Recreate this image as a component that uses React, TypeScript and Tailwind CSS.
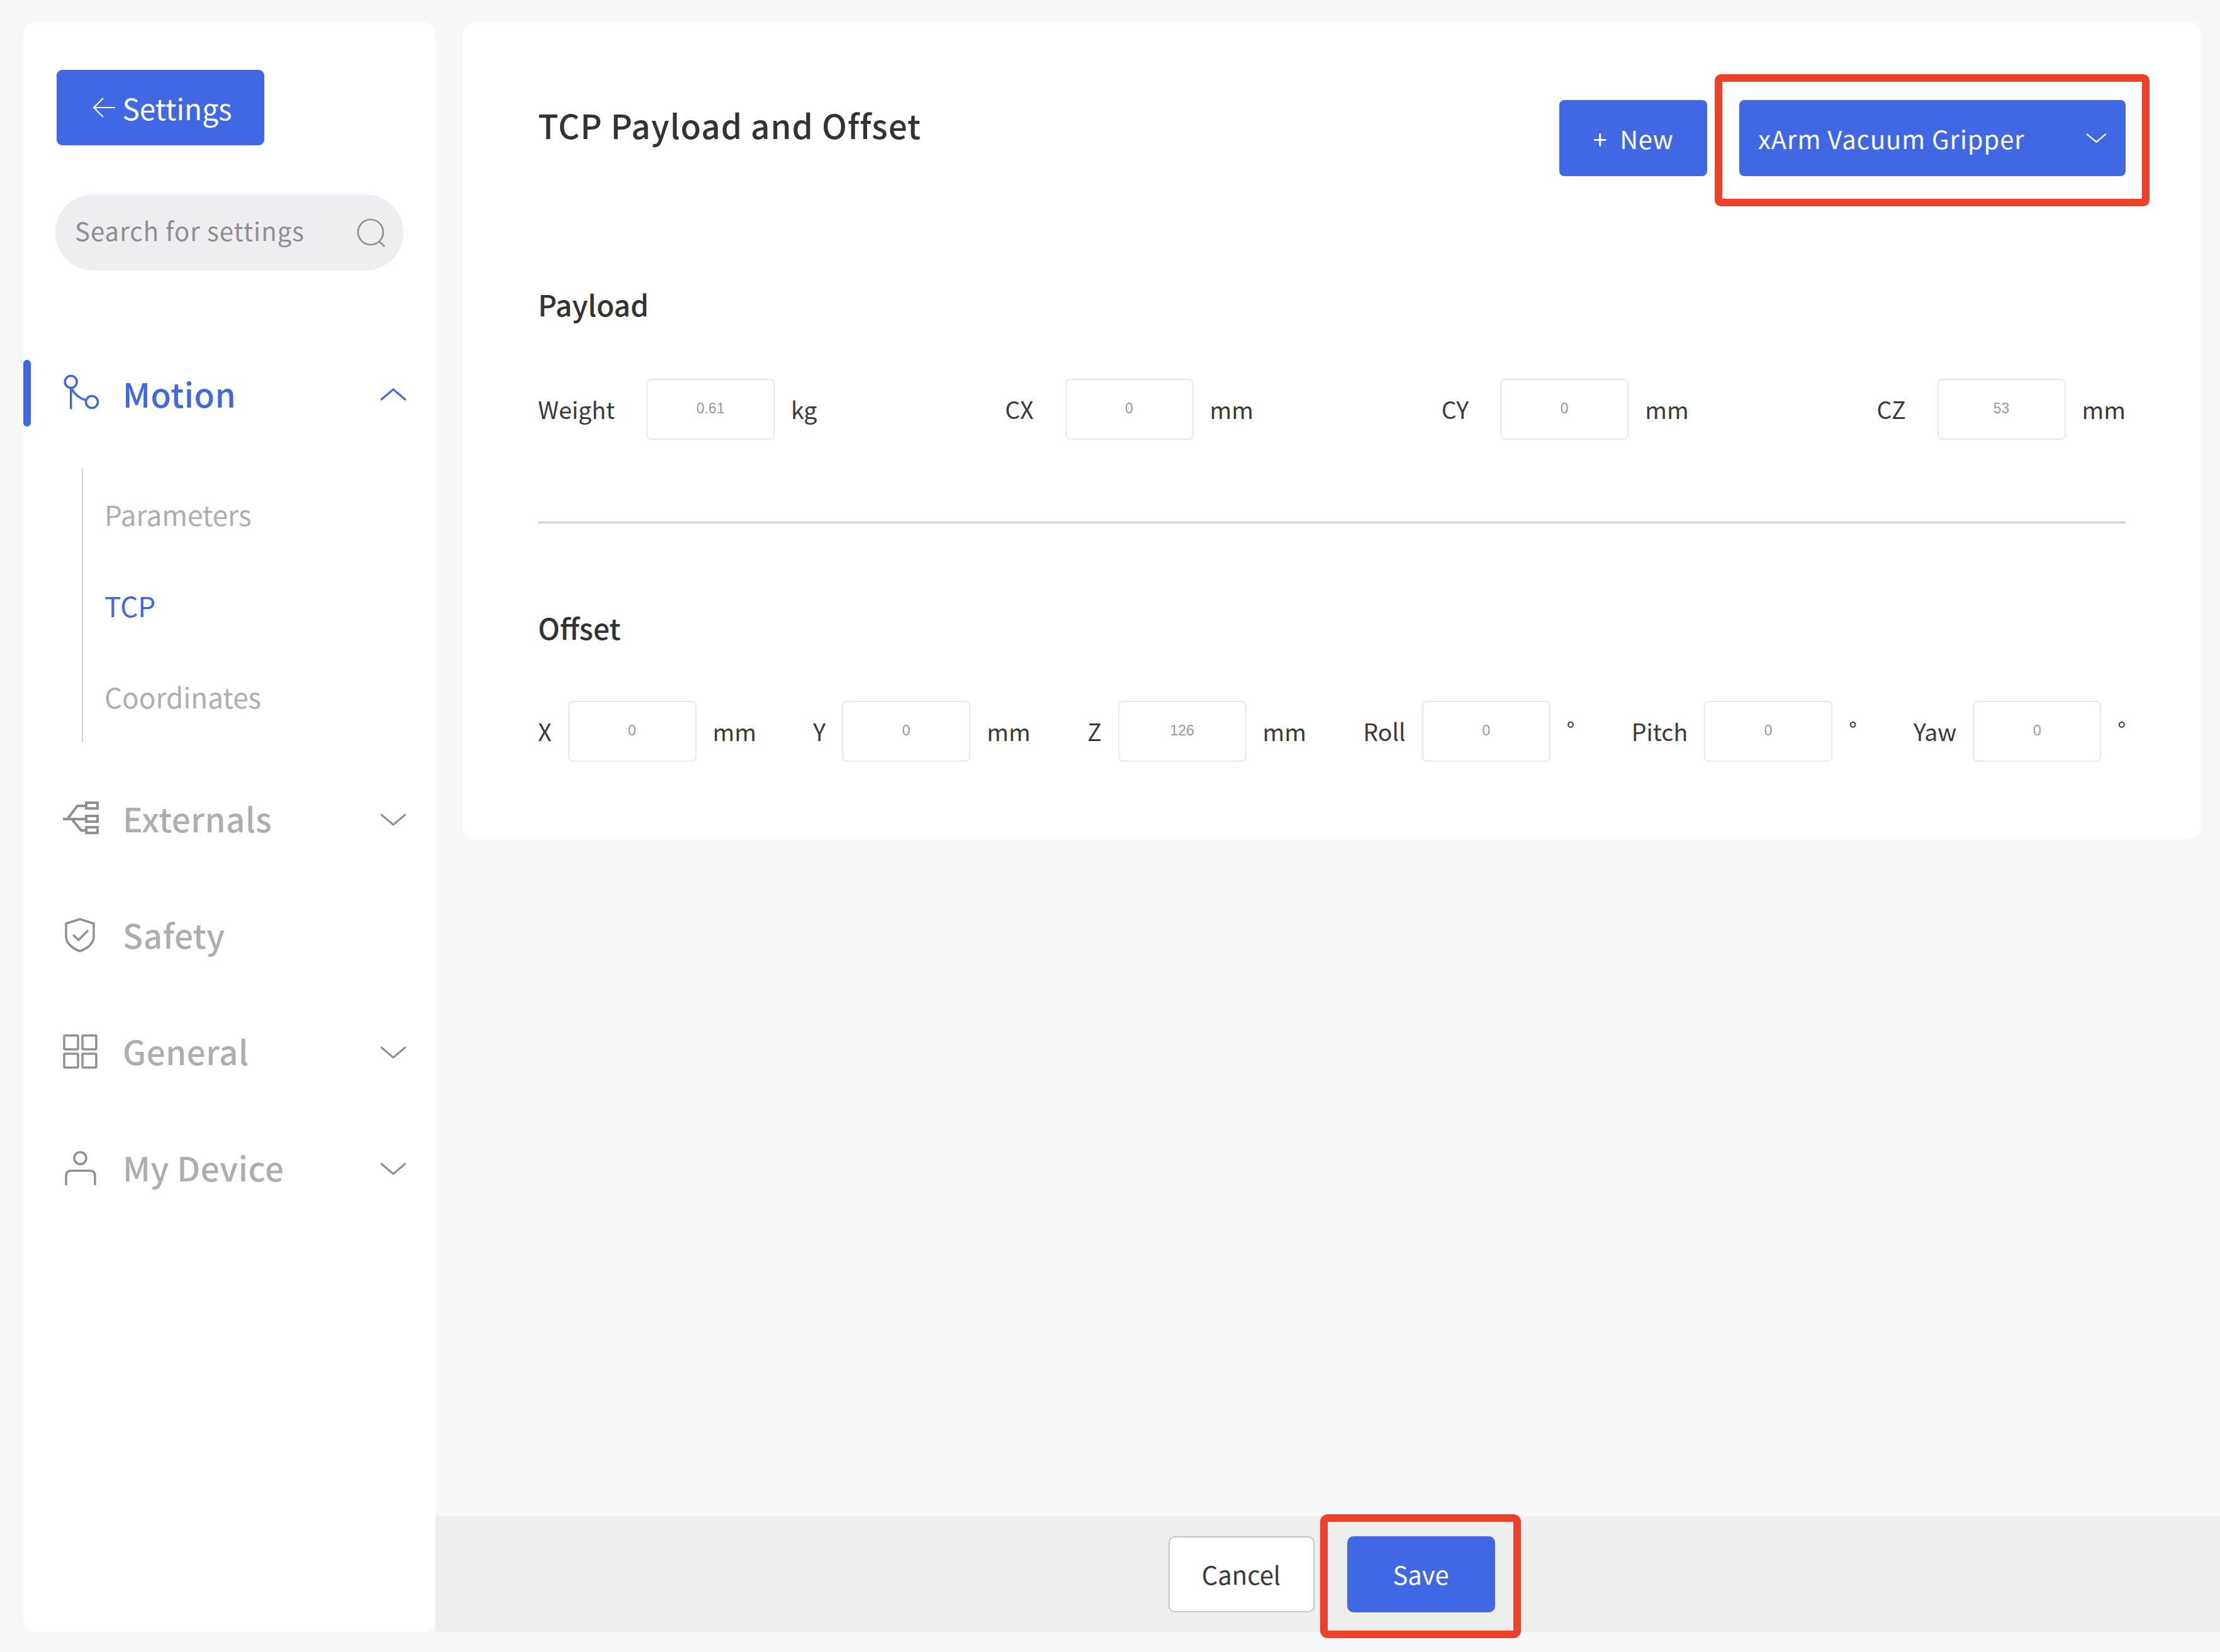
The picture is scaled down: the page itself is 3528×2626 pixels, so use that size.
import type { ReactNode } from "react";

function Chevron({ up, className }: { up?: boolean; className: string }) {
  return (
    <svg viewBox="0 0 40 20" className={className} fill="none" stroke="currentColor" strokeWidth="3" strokeLinecap="round">
      <polyline points={up ? "1,18 20,2 39,18" : "1,2 20,18 39,2"} />
    </svg>
  );
}

function NavIcon({ top, children }: { top: number; children: ReactNode }) {
  return (
    <svg viewBox={`0 ${top} 90 90`} className="w-[90px] h-[90px] shrink-0" fill="none" stroke="currentColor" strokeWidth="3.5">
      {children}
    </svg>
  );
}

function NavRow({ label, icon, open, active }: { label: string; icon: ReactNode; open?: boolean; active?: boolean }) {
  return (
    <div className={`relative flex h-[106px] items-center pl-[53px] pr-[47px] ${active ? "text-[#4068e5]" : "text-[#8f8f95]"}`}>
      {active && <div className="absolute left-0 top-0 h-full w-[12px] rounded-full bg-[#4068e5]" />}
      {icon}
      <span className={`ml-[15px] flex-1 text-[53px] leading-none font-medium tracking-[0.5px] ${active ? "" : "-translate-y-[3px] text-[#aeaeb2]"}`}>{label}</span>
      {open !== undefined && <Chevron up={open} className={open ? "w-[40px] h-[20px] translate-y-[2px]" : "w-[40px] h-[20px]"} />}
    </div>
  );
}

function Field({ label, value, unit, wide, degree }: { label: string; value: string; unit: string; wide?: boolean; degree?: boolean }) {
  return (
    <div className="flex items-center text-[37.5px] text-[#3a3a3a]">
      <span>{label}</span>
      <input
        readOnly
        value={value}
        className={`h-[97px] w-[204px] rounded-[8px] border-2 border-[#e8e8ee] bg-white pb-[2px] text-center font-['Liberation_Sans',sans-serif] text-[23px] text-[#999999] outline-none ${wide ? "ml-[50px]" : "ml-[26px]"}`}
      />
      <span className={degree ? "ml-[26px] -translate-y-[4px] text-[34px]" : "ml-[26px]"}>{unit}</span>
    </div>
  );
}

export default function App() {
  return (
    <div className="flex h-[2626px] w-[3528px] bg-[#f7f8fa] pl-[37px] pt-[35px] pb-[32px] font-['Noto_Sans_CJK_SC',sans-serif]">
      <aside className="w-[655px] shrink-0 rounded-[20px] bg-white pt-[76px]">
        <div className="ml-[53px] flex h-[120px] w-[330px] items-center justify-center gap-[11px] rounded-[9px] bg-[#4068e5] pl-[6px] text-[46px] text-white">
          <svg viewBox="0 0 36 32" className="w-[36px] h-[32px]" fill="none" stroke="currentColor" strokeWidth="2.2">
            <path d="M36 16H2M17 1 2 16l15 15" />
          </svg>
          <span className="leading-none">Settings</span>
        </div>
        <div className="ml-[51px] mt-[78px] flex h-[121px] w-[553px] items-center justify-between rounded-full bg-[#eeedf2] pl-[31px] pr-[28px] text-[40px] tracking-[1.1px] text-[#8e8e8e]">
          <span className="-translate-y-[4px]">Search for settings</span>
          <svg viewBox="0 0 46 46" className="w-[46px] h-[46px]" fill="none" stroke="currentColor" strokeWidth="2.6">
            <circle cx="22" cy="22" r="20" />
            <path d="m36 37 8 8" />
          </svg>
        </div>
        <div className="mt-[142px]">
          <NavRow
            active
            open
            label="Motion"
            icon={
              <NavIcon top={-2}>
                <circle cx="22.7" cy="25" r="9.5" />
                <circle cx="56" cy="57" r="9.5" />
                <path d="M22.7 35v32M24 36c5 10 12 15 22.500 18" strokeLinecap="round" />
              </NavIcon>
            }
          />
        </div>
        <div className="ml-[93px] mt-[66px] flex h-[436px] flex-col gap-[97px] border-l-2 border-[#d4d4d4] pl-[34px] pt-[49px] text-[44px] leading-[48px] text-[#aeaeb2]">
          <span>Parameters</span>
          <span className="text-[#4068e5]">TCP</span>
          <span>Coordinates</span>
        </div>
        <div className="mt-[70px] flex flex-col gap-[79px]">
          <NavRow
            open={false}
            label="Externals"
            icon={
              <NavIcon top={-2}>
                <path d="M10 42h36M17 42l16-21h13M24 42l15 18h7" strokeWidth="4" />
                <rect x="47" y="16" width="18" height="9" strokeWidth="4" />
                <rect x="47" y="37" width="18" height="9" strokeWidth="4" />
                <rect x="47" y="55" width="18" height="9" strokeWidth="4" />
              </NavIcon>
            }
          />
          <NavRow
            label="Safety"
            icon={
              <NavIcon top={2}>
                <path d="M37 20 15 27v21c0 12 13 20 22 23 9-3 22-11 22-23V27Z" />
                <path d="m26 45 9 8 15-15" />
              </NavIcon>
            }
          />
          <NavRow
            open={false}
            label="General"
            icon={
              <NavIcon top={-1}>
                <rect x="12" y="17" width="22" height="22" rx="1.500" />
                <rect x="41" y="17" width="22" height="22" rx="1.500" />
                <rect x="12" y="46" width="22" height="22" rx="1.500" />
                <rect x="41" y="46" width="22" height="22" rx="1.500" />
              </NavIcon>
            }
          />
          <NavRow
            open={false}
            label="My Device"
            icon={
              <NavIcon top={-2}>
                <circle cx="37.500" cy="26" r="9.500" />
                <path d="M15 69V54q0-8 8-8h30q8 0 8 8v15" />
              </NavIcon>
            }
          />
        </div>
      </aside>

      <div className="flex min-w-0 flex-1 flex-col">
        <main className="ml-[43px] mr-[30px] h-[1299px] rounded-[20px] bg-white px-[120px] pt-[124px]">
          <div className="flex items-start justify-between">
            <h1 className="mt-[2px] text-[53px] leading-[74px] font-medium tracking-[1px] text-[#333333]">TCP Payload and Offset</h1>
            <div className="flex gap-[51px]">
              <div className="flex h-[121px] w-[235px] items-center justify-center gap-[20px] rounded-[8px] bg-[#4068e5] text-[40px] tracking-[0.6px] text-white">
                <span>+</span>
                <span>New</span>
              </div>
              <div className="relative flex h-[121px] w-[614px] items-center justify-between rounded-[8px] bg-[#4068e5] pl-[30px] pr-[31px] text-[40px] tracking-[0.9px] text-white">
                <span>xArm Vacuum Gripper</span>
                <Chevron className="w-[31px] h-[17px]" />
                <div className="absolute -left-[39px] -right-[38px] -top-[41px] -bottom-[48px] rounded-[10px] border-[12px] border-[#ee4026]" />
              </div>
            </div>
          </div>
          <h2 className="mt-[172px] text-[46px] leading-[62px] font-medium text-[#333333]">Payload</h2>
          <div className="mt-[88px] flex items-center justify-between">
            <Field wide label="Weight" value="0.61" unit="kg" />
            <Field wide label="CX" value="0" unit="mm" />
            <Field wide label="CY" value="0" unit="mm" />
            <Field wide label="CZ" value="53" unit="mm" />
          </div>
          <div className="mt-[130px] h-[3px] bg-[#d2d2d2]" />
          <h2 className="mt-[134px] text-[46px] leading-[62px] font-medium text-[#333333]">Offset</h2>
          <div className="mt-[86px] flex items-center justify-between">
            <Field label="X" value="0" unit="mm" />
            <Field label="Y" value="0" unit="mm" />
            <Field label="Z" value="126" unit="mm" />
            <Field label="Roll" value="0" unit="°" degree />
            <Field label="Pitch" value="0" unit="°" degree />
            <Field label="Yaw" value="0" unit="°" degree />
          </div>
        </main>
        <div className="flex-1" />
        <footer className="flex h-[184px] items-center justify-center gap-[52px] bg-[#eeeeee] pl-[12px] text-[40px]">
          <div className="flex h-[121px] w-[232px] items-center justify-center rounded-[10px] border-2 border-[#c4c4c4] bg-white text-[#3a3a3a]">Cancel</div>
          <div className="relative flex h-[121px] w-[235px] items-center justify-center rounded-[10px] bg-[#4068e5] text-white">
            Save
            <div className="absolute -left-[43px] -right-[41px] -top-[35px] -bottom-[41px] rounded-[12px] border-[12px] border-[#ee4026]" />
          </div>
        </footer>
      </div>
    </div>
  );
}
